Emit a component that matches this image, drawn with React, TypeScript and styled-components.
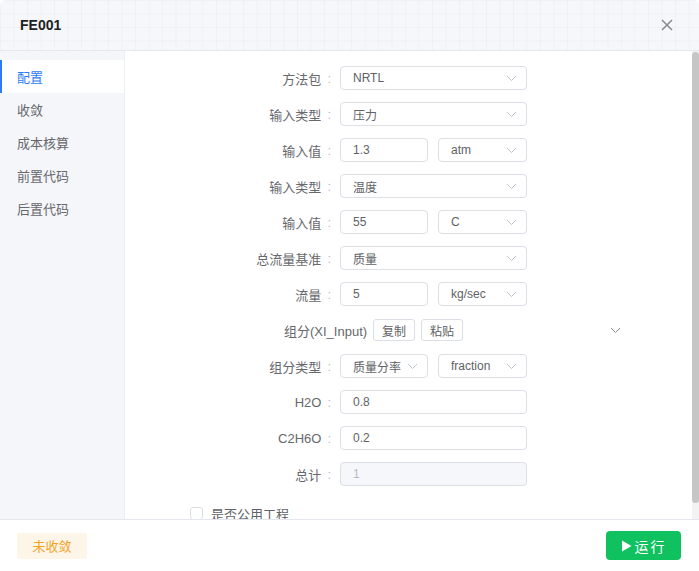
import styled, { createGlobalStyle } from "styled-components";

const GlobalStyle = createGlobalStyle`
  html, body {
    margin: 0;
    padding: 0;
    background: #fff;
  }
  body {
    font-family: "Liberation Sans", "Noto Sans CJK SC", sans-serif;
  }
  * {
    box-sizing: border-box;
  }
`;

const FONT = `"Liberation Sans", "Noto Sans CJK SC", sans-serif`;

const Modal = styled.div`
  width: 699px;
  height: 571px;
  display: flex;
  flex-direction: column;
  background: #fff;
  border-radius: 6px;
  overflow: hidden;
  font-family: ${FONT};
`;

const Header = styled.div`
  height: 51px;
  flex: none;
  display: flex;
  align-items: center;
  justify-content: space-between;
  padding: 0 24px 0 20px;
  border-bottom: 1px solid #e4e7ed;
  background-color: #f6f7fa;
  background-image: linear-gradient(to right, rgba(225, 228, 236, 0.3) 1px, transparent 1px),
    linear-gradient(to bottom, rgba(225, 228, 236, 0.3) 1px, transparent 1px);
  background-size: 13.5px 13.5px;
`;

const Title = styled.div`
  font-size: 14px;
  font-weight: 700;
  color: #1f1f1f;
`;

const CloseButton = styled.button`
  border: none;
  background: none;
  padding: 0;
  width: 16px;
  height: 16px;
  display: flex;
  align-items: center;
  justify-content: center;
  color: #8a8d93;
  cursor: pointer;
`;

const Body = styled.div`
  flex: 1;
  display: flex;
  min-height: 0;
`;

const Sidebar = styled.nav`
  width: 125px;
  flex: none;
  background: #f5f6fa;
  border-right: 1px solid #ebeef5;
  padding-top: 9px;
  display: flex;
  flex-direction: column;
`;

const SideItem = styled.div<{ $active?: boolean }>`
  height: 33px;
  display: flex;
  align-items: center;
  padding-left: 15px;
  font-size: 13px;
  color: ${({ $active }) => ($active ? "#2d7cf6" : "#66686c")};
  background: ${({ $active }) => ($active ? "#fff" : "transparent")};
  border-left: 2px solid ${({ $active }) => ($active ? "#2d7cf6" : "transparent")};
  cursor: pointer;
`;

const Content = styled.div`
  flex: 1;
  overflow: hidden;
  padding: 15px 0 12px 15px;
`;

const ScrollTrack = styled.div`
  width: 7px;
  flex: none;
  background: #f3f3f3;
  display: flex;
  flex-direction: column;
  padding-top: 1px;
`;

const ScrollThumb = styled.div`
  background: #c6c6c6;
  border-radius: 4px;
`;

const Form = styled.div`
  display: flex;
  flex-direction: column;
  gap: 12px;
`;

const Row = styled.div`
  display: grid;
  grid-template-columns: 200px 187px;
  align-items: center;
  height: 24px;
`;

const Label = styled.label`
  display: flex;
  justify-content: flex-end;
  align-items: center;
  font-size: 13px;
  color: #66686c;
  white-space: nowrap;

  &::after {
    content: ":";
    color: #b8bbc2;
    margin: 0 9px 0 6px;
  }
`;

const Pair = styled.div`
  display: grid;
  grid-template-columns: 88px 89px;
  gap: 10px;
`;

const Field = styled.div<{ $disabled?: boolean }>`
  height: 24px;
  border: 1px solid #dcdfe6;
  border-radius: 4px;
  display: flex;
  align-items: center;
  justify-content: space-between;
  padding: 0 9px 0 12px;
  font-size: 12px;
  color: ${({ $disabled }) => ($disabled ? "#b6bac2" : "#606266")};
  background: ${({ $disabled }) => ($disabled ? "#f5f7fa" : "#fff")};
`;

const GroupRow = styled.div`
  height: 24px;
  display: flex;
  align-items: center;
  justify-content: space-between;
  padding-left: 144px;
  padding-right: 71px;
`;

const GroupLeft = styled.div`
  display: flex;
  align-items: center;
  gap: 6px;
  font-size: 13px;
  color: #66686c;
`;

const SmallButton = styled.button`
  height: 22px;
  padding: 0 8px;
  border: 1px solid #dcdfe6;
  border-radius: 3px;
  background: #fff;
  font-family: ${FONT};
  font-size: 12px;
  color: #606266;
`;

const CheckRow = styled.div`
  display: flex;
  align-items: center;
  gap: 8px;
  padding-left: 50px;
  margin-top: 6px;
  font-size: 13px;
  color: #606266;
`;

const Box = styled.span`
  width: 13px;
  height: 13px;
  border: 1px solid #dcdfe6;
  border-radius: 3px;
  background: #fff;
`;

const Footer = styled.div`
  height: 52px;
  flex: none;
  border-top: 1px solid #e4e7ed;
  display: flex;
  align-items: center;
  justify-content: space-between;
  padding: 0 18px 0 17px;
`;

const Status = styled.div`
  height: 26px;
  width: 70px;
  border-radius: 3px;
  background: #fdf5e8;
  color: #f2a41f;
  font-size: 13px;
  display: flex;
  align-items: center;
  justify-content: center;
`;

const RunButton = styled.button`
  height: 29px;
  width: 75px;
  border: none;
  border-radius: 4px;
  background: #10c25f;
  color: #fff;
  font-family: ${FONT};
  font-size: 14px;
  letter-spacing: 2px;
  display: flex;
  align-items: center;
  justify-content: center;
  gap: 3px;
`;

const Chevron = ({ color = "#c0c4cc" }: { color?: string }) => (
  <svg width="11" height="7" viewBox="0 0 11 7" fill="none">
    <path d="M1 1l4.5 4.5L10 1" stroke={color} strokeWidth="1" />
  </svg>
);

function Select({ value }: { value: string }) {
  return (
    <Field>
      <span>{value}</span>
      <Chevron />
    </Field>
  );
}

const menu = ["配置", "收敛", "成本核算", "前置代码", "后置代码"];

export default function App() {
  // visible area / total content height of the scrolling pane
  const thumbRatio = 0.965;

  return (
    <>
      <GlobalStyle />
      <Modal>
        <Header>
          <Title>FE001</Title>
          <CloseButton>
            <svg width="12" height="12" viewBox="0 0 12 12">
              <path d="M1 1l10 10M11 1L1 11" stroke="currentColor" strokeWidth="1.6" />
            </svg>
          </CloseButton>
        </Header>
        <Body>
          <Sidebar>
            {menu.map((m, i) => (
              <SideItem key={m} $active={i === 0}>
                {m}
              </SideItem>
            ))}
          </Sidebar>
          <Content>
            <Form>
              <Row>
                <Label>方法包</Label>
                <Select value="NRTL" />
              </Row>
              <Row>
                <Label>输入类型</Label>
                <Select value="压力" />
              </Row>
              <Row>
                <Label>输入值</Label>
                <Pair>
                  <Field>1.3</Field>
                  <Select value="atm" />
                </Pair>
              </Row>
              <Row>
                <Label>输入类型</Label>
                <Select value="温度" />
              </Row>
              <Row>
                <Label>输入值</Label>
                <Pair>
                  <Field>55</Field>
                  <Select value="C" />
                </Pair>
              </Row>
              <Row>
                <Label>总流量基准</Label>
                <Select value="质量" />
              </Row>
              <Row>
                <Label>流量</Label>
                <Pair>
                  <Field>5</Field>
                  <Select value="kg/sec" />
                </Pair>
              </Row>
              <GroupRow>
                <GroupLeft>
                  <span>组分(XI_Input)</span>
                  <SmallButton>复制</SmallButton>
                  <SmallButton>粘贴</SmallButton>
                </GroupLeft>
                <Chevron color="#888b91" />
              </GroupRow>
              <Row>
                <Label>组分类型</Label>
                <Pair>
                  <Select value="质量分率" />
                  <Select value="fraction" />
                </Pair>
              </Row>
              <Row>
                <Label>H2O</Label>
                <Field>0.8</Field>
              </Row>
              <Row>
                <Label>C2H6O</Label>
                <Field>0.2</Field>
              </Row>
              <Row>
                <Label>总计</Label>
                <Field $disabled>1</Field>
              </Row>
              <CheckRow>
                <Box />
                <span>是否公用工程</span>
              </CheckRow>
            </Form>
          </Content>
          <ScrollTrack>
            <ScrollThumb style={{ height: `${thumbRatio * 100}%` }} />
          </ScrollTrack>
        </Body>
        <Footer>
          <Status>未收敛</Status>
          <RunButton>
            <svg width="11" height="12" viewBox="0 0 11 12">
              <path d="M1 0.5L10.5 6L1 11.5z" fill="#fff" />
            </svg>
            运行
          </RunButton>
        </Footer>
      </Modal>
    </>
  );
}
